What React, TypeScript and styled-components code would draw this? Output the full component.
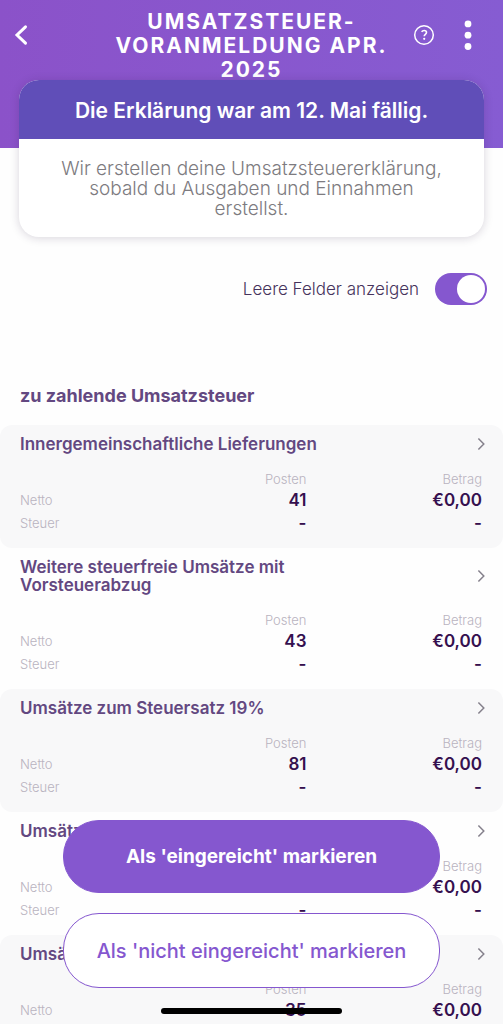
import React, { useState } from 'react';
import styled, { createGlobalStyle } from 'styled-components';

const GlobalStyle = createGlobalStyle`
  * {
    box-sizing: border-box;
  }
  body {
    margin: 0;
    background: #fefefe;
    color: #3b1a5c;
    font-family: Inter, 'Liberation Sans', sans-serif;
  }
  button {
    font-family: inherit;
    cursor: pointer;
  }
`;

const Screen = styled.div`
  position: relative;
  display: flex;
  flex-direction: column;
  height: 100vh;
  overflow: hidden;
`;

const Header = styled.header`
  display: grid;
  grid-template-columns: 96px 1fr 96px;
  flex: none;
  min-height: 148px;
  padding: 10px 0;
  align-items: start;
  background: linear-gradient(90deg, #8b52c9, #865cd2);
  color: #fff;
`;

const Title = styled.h1`
  margin: 0;
  font-size: 21px;
  line-height: 24px;
  font-weight: 700;
  letter-spacing: 2px;
  text-align: center;
  text-transform: uppercase;
`;

const HeaderSide = styled.div<{ $end?: boolean }>`
  display: flex;
  align-items: center;
  justify-content: ${(p) => (p.$end ? 'flex-end' : 'flex-start')};
  gap: 29px;
  height: 50px;
  padding: 0 ${(p) => (p.$end ? 31 : 10)}px;
`;

const IconButton = styled.button`
  display: flex;
  padding: 0;
  border: 0;
  background: none;
  color: inherit;
`;

const Notice = styled.section`
  position: relative;
  flex: none;
  margin: -68px 19px 0;
  overflow: hidden;
  border-radius: 20px;
  background: #fff;
  box-shadow: 0 1px 10px rgba(40, 20, 60, 0.18);
  text-align: center;
`;

const NoticeTitle = styled.h2`
  margin: 0;
  padding: 19px 16px 16px;
  background: #604eb8;
  color: #fff;
  font-size: 21px;
  line-height: 24px;
  font-weight: 600;
`;

const NoticeText = styled.p`
  margin: 0;
  padding: 20px 40px 18px;
  color: #7d7b80;
  font-size: 19px;
  line-height: 20px;
  font-weight: 300;
`;

const Content = styled.main`
  flex: 1;
  min-height: 0;
  overflow-y: auto;
  scrollbar-width: none;
`;

const SwitchLabel = styled.label`
  display: flex;
  align-items: center;
  justify-content: flex-end;
  gap: 16px;
  padding: 36px 16px 0;
  color: #46335c;
  font-size: 17px;
  line-height: 24px;
  font-weight: 300;
`;

const Switch = styled.input`
  appearance: none;
  display: flex;
  align-items: center;
  width: 52px;
  height: 32px;
  margin: 0;
  padding: 2px;
  border-radius: 16px;
  background: #c9c4d0;
  cursor: pointer;

  &::before {
    content: '';
    width: 28px;
    height: 28px;
    border-radius: 50%;
    background: #fff;
  }
  &:checked {
    justify-content: flex-end;
    background: #8557cf;
  }
`;

const GroupTitle = styled.h2`
  margin: 80px 20px 18px;
  color: #634881;
  font-size: 18px;
  line-height: 22px;
  font-weight: 700;
`;

const Entry = styled.section`
  padding: 10px 18px 13px 20px;
  border-radius: 12px;

  &:nth-of-type(odd) {
    background: #f8f8f9;
  }
`;

const EntryLink = styled.a`
  display: flex;
  align-items: center;
  justify-content: space-between;
  color: #634881;
  text-decoration: none;
`;

const EntryTitle = styled.h3`
  max-width: 310px;
  margin: 0;
  font-size: 17px;
  line-height: 18px;
  font-weight: 600;
`;

const Figures = styled.table`
  width: calc(100% - 3px);
  margin-top: 17px;
  border-collapse: collapse;
  table-layout: fixed;

  th,
  td {
    padding: 0;
    text-align: right;
  }
  tbody tr {
    height: 23px;
  }
  th {
    color: #b9b3c0;
    font-size: 13px;
    line-height: 19px;
    font-weight: 300;
  }
  th[scope='row'] {
    text-align: left;
  }
  td {
    color: #35104f;
    font-size: 17px;
    line-height: 19px;
    font-weight: 600;
  }
  th:last-child,
  td:last-child {
    width: 38%;
  }
`;

const Actions = styled.footer`
  position: absolute;
  right: 0;
  bottom: 0;
  left: 0;
  display: flex;
  flex-direction: column;
  align-items: center;
  gap: 20px;
  padding: 0 63px 10px;
`;

const ActionButton = styled.button<{ $primary?: boolean }>`
  width: 100%;
  height: ${(p) => (p.$primary ? 73 : 75)}px;
  border: 1px solid #8557cf;
  border-radius: 36px;
  background: ${(p) => (p.$primary ? '#8557cf' : '#fff')};
  color: ${(p) => (p.$primary ? '#fff' : '#8557cf')};
  font-size: ${(p) => (p.$primary ? 19 : 20)}px;
  line-height: 24px;
  font-weight: ${(p) => (p.$primary ? 700 : 500)};
`;

const HomeBar = styled.div`
  width: 181px;
  height: 6px;
  border-radius: 3px;
  background: #000;
`;

interface EntryData {
  title: string;
  count: string;
}

const entries: EntryData[] = [
  { title: 'Innergemeinschaftliche Lieferungen', count: '41' },
  { title: 'Weitere steuerfreie Umsätze mit Vorsteuerabzug', count: '43' },
  { title: 'Umsätze zum Steuersatz 19%', count: '81' },
  { title: 'Umsätze zum Steuersatz 7%', count: '-' },
  { title: 'Umsätze zum Steuersatz 0%', count: '35' },
];

function BackIcon() {
  return (
    <svg width="20" height="24" viewBox="0 0 20 24" fill="none" stroke="currentColor" strokeWidth="3" strokeLinecap="round">
      <path d="M15.5 3.8 7 12l8.5 8.2" />
    </svg>
  );
}

function HelpIcon() {
  return (
    <svg width="22" height="22" viewBox="0 0 22 22" fill="none" stroke="currentColor" strokeWidth="1.5">
      <circle cx="11" cy="11" r="9.3" />
      <path d="M8.6 7.8c.7-.9 1.5-1.3 2.5-1.3 1.5 0 2.4.8 2.4 2 0 1.9-2.3 1.8-2.3 3.7" strokeWidth="1.6" />
      <circle cx="11.2" cy="14.8" r="1.1" fill="currentColor" stroke="none" />
    </svg>
  );
}

function MoreIcon() {
  return (
    <svg width="8" height="30" viewBox="0 0 8 30" fill="currentColor">
      <circle cx="4" cy="3.9" r="3.4" />
      <circle cx="4" cy="15.2" r="3.4" />
      <circle cx="4" cy="26.5" r="3.4" />
    </svg>
  );
}

function ChevronIcon() {
  return (
    <svg width="8" height="14" viewBox="0 0 8 14" fill="none" stroke="#85818c" strokeWidth="1.5">
      <path d="M1.4 1.5 6.8 7l-5.4 5.5" />
    </svg>
  );
}

function TaxEntry({ title, count }: EntryData) {
  return (
    <Entry>
      <EntryLink href="#">
        <EntryTitle>{title}</EntryTitle>
        <ChevronIcon />
      </EntryLink>
      <Figures>
        <thead>
          <tr>
            <td />
            <th scope="col">Posten</th>
            <th scope="col">Betrag</th>
          </tr>
        </thead>
        <tbody>
          <tr>
            <th scope="row">Netto</th>
            <td>{count}</td>
            <td>€0,00</td>
          </tr>
          <tr>
            <th scope="row">Steuer</th>
            <td>-</td>
            <td>-</td>
          </tr>
        </tbody>
      </Figures>
    </Entry>
  );
}

export default function App() {
  const [showEmpty, setShowEmpty] = useState(true);

  return (
    <Screen>
      <GlobalStyle />
      <Header>
        <HeaderSide>
          <IconButton aria-label="Zurück">
            <BackIcon />
          </IconButton>
        </HeaderSide>
        <Title>Umsatzsteuer-Voranmeldung Apr. 2025</Title>
        <HeaderSide $end>
          <IconButton aria-label="Hilfe">
            <HelpIcon />
          </IconButton>
          <IconButton aria-label="Mehr">
            <MoreIcon />
          </IconButton>
        </HeaderSide>
      </Header>
      <Notice>
        <NoticeTitle>Die Erklärung war am 12. Mai fällig.</NoticeTitle>
        <NoticeText>
          Wir erstellen deine Umsatzsteuererklärung, sobald du Ausgaben und Einnahmen erstellst.
        </NoticeText>
      </Notice>
      <Content>
        <SwitchLabel>
          Leere Felder anzeigen
          <Switch
            type="checkbox"
            role="switch"
            checked={showEmpty}
            onChange={(e) => setShowEmpty(e.target.checked)}
          />
        </SwitchLabel>
        <GroupTitle>zu zahlende Umsatzsteuer</GroupTitle>
        {entries.map((entry) => (
          <TaxEntry key={entry.title} {...entry} />
        ))}
      </Content>
      <Actions>
        <ActionButton $primary>Als 'eingereicht' markieren</ActionButton>
        <ActionButton>Als 'nicht eingereicht' markieren</ActionButton>
        <HomeBar />
      </Actions>
    </Screen>
  );
}
